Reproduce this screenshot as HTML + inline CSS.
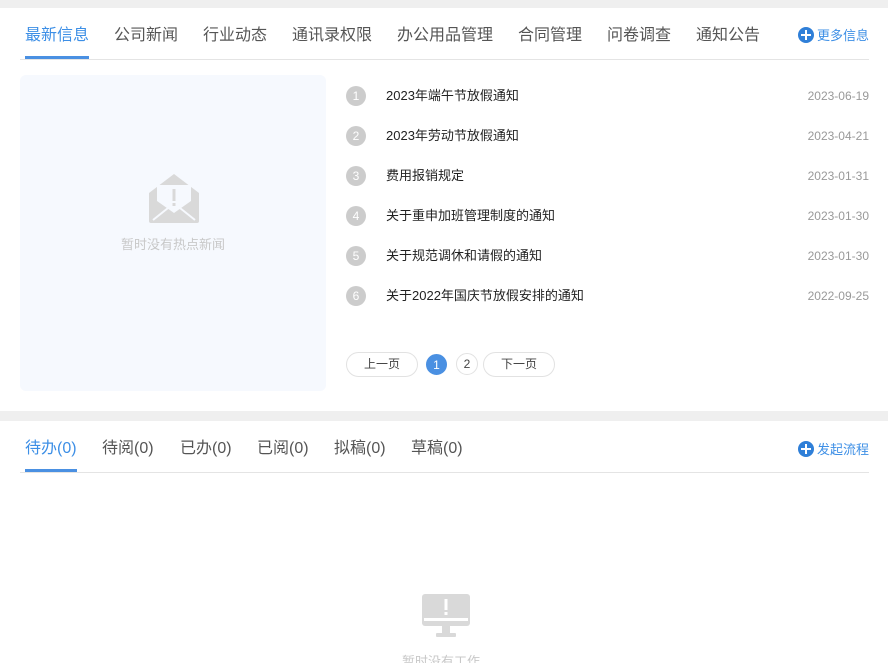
<!DOCTYPE html>
<html><head><meta charset="utf-8"><style>
*{margin:0;padding:0;box-sizing:border-box}
html,body{width:888px;height:663px;overflow:hidden}
body{background:#efefef;font-family:"Liberation Sans","Noto Sans CJK SC",sans-serif;position:relative}
.panel{position:absolute;left:0;right:0;background:#fff}
.tabs{position:absolute;left:20px;right:19px;height:1px;background:#e4e4e4}
.tab{position:absolute;font-size:16px;color:#555;white-space:nowrap;line-height:20px}
.tab.on{color:#3d8fe6}
.ul{position:absolute;height:3px;background:#4a90e2}
.more{position:absolute;right:19px;font-size:13px;color:#3d8fe6;display:flex;align-items:center;gap:3px}
.more i{display:inline-block;width:16px;height:16px;border-radius:50%;background:#2f7fd8;position:relative}
.more i:before{content:"";position:absolute;left:3px;top:7px;width:10px;height:2px;background:#fff}
.more i:after{content:"";position:absolute;left:7px;top:3px;width:2px;height:10px;background:#fff}
.box{position:absolute;left:20px;top:75px;width:306px;height:316px;background:#f6f9fe;border-radius:6px}
.row{position:absolute;left:346px;width:523px;height:20px;font-size:13px;color:#222;line-height:20px}
.row .n{position:absolute;left:0;top:0;width:20px;height:20px;border-radius:50%;background:#ccc;color:#fff;text-align:center;font-size:12px}
.row .t{position:absolute;left:40px}
.row .d{position:absolute;right:0;color:#999;font-size:12px}
.pg{position:absolute;top:352px;height:25px;border:1px solid #e2e2e2;border-radius:13px;font-size:12px;color:#444;text-align:center;line-height:23px}
</style></head><body>
<div class="panel" style="top:8px;height:403px"></div>
<div class="panel" style="top:421px;height:242px"></div>

<div class="tab on" style="left:25px;top:26px">最新信息</div>
<div class="tab" style="left:114px;top:26px">公司新闻</div>
<div class="tab" style="left:203px;top:26px">行业动态</div>
<div class="tab" style="left:292px;top:26px">通讯录权限</div>
<div class="tab" style="left:397px;top:26px">办公用品管理</div>
<div class="tab" style="left:518px;top:26px">合同管理</div>
<div class="tab" style="left:607px;top:26px">问卷调查</div>
<div class="tab" style="left:696px;top:26px">通知公告</div>
<div class="more" style="top:25px"><i></i>更多信息</div>
<div class="tabs" style="top:59px"></div>
<div class="ul" style="left:25px;top:56px;width:64px"></div>

<div class="box">
<svg style="position:absolute;left:128px;top:98px" width="52" height="52" viewBox="0 0 52 52"><path d="M1 20 L26 1 L51 20 L51 48 Q51 50 49 50 L3 50 Q1 50 1 48Z" fill="#d9d9d9"/><path d="M9 12 H43 V28 L26 40 L9 28Z" fill="#f6f9fe"/><rect x="24.5" y="16" width="3" height="12" fill="#d9d9d9"/><rect x="24.5" y="30" width="3" height="3" fill="#d9d9d9"/><path d="M5 47 L20 35 M47 47 L32 35" stroke="#f6f9fe" stroke-width="2"/></svg>
<div style="position:absolute;left:0;right:0;top:159px;text-align:center;font-size:13px;color:#c8c8c8">暂时没有热点新闻</div>
</div>

<div class="row" style="top:86px"><span class="n">1</span><span class="t">2023年端午节放假通知</span><span class="d">2023-06-19</span></div>
<div class="row" style="top:126px"><span class="n">2</span><span class="t">2023年劳动节放假通知</span><span class="d">2023-04-21</span></div>
<div class="row" style="top:166px"><span class="n">3</span><span class="t">费用报销规定</span><span class="d">2023-01-31</span></div>
<div class="row" style="top:206px"><span class="n">4</span><span class="t">关于重申加班管理制度的通知</span><span class="d">2023-01-30</span></div>
<div class="row" style="top:246px"><span class="n">5</span><span class="t">关于规范调休和请假的通知</span><span class="d">2023-01-30</span></div>
<div class="row" style="top:286px"><span class="n">6</span><span class="t">关于2022年国庆节放假安排的通知</span><span class="d">2022-09-25</span></div>

<div class="pg" style="left:346px;width:72px">上一页</div>
<div class="pg" style="left:426px;width:21px;height:21px;top:354px;line-height:21px;background:#4a90e2;border-color:#4a90e2;color:#fff">1</div>
<div class="pg" style="left:456px;width:22px;height:22px;top:353px;line-height:20px">2</div>
<div class="pg" style="left:483px;width:72px">下一页</div>

<div class="tab on" style="left:25px;top:439px">待办(0)</div>
<div class="tab" style="left:102px;top:439px">待阅(0)</div>
<div class="tab" style="left:180px;top:439px">已办(0)</div>
<div class="tab" style="left:257px;top:439px">已阅(0)</div>
<div class="tab" style="left:334px;top:439px">拟稿(0)</div>
<div class="tab" style="left:411px;top:439px">草稿(0)</div>
<div class="more" style="top:439px"><i></i>发起流程</div>
<div class="tabs" style="top:472px"></div>
<div class="ul" style="left:25px;top:469px;width:52px"></div>

<svg style="position:absolute;left:422px;top:594px" width="48" height="44" viewBox="0 0 48 44"><rect x="0" y="0" width="48" height="32" rx="3" fill="#d9d9d9"/><rect x="2" y="24" width="44" height="3" fill="#fff"/><rect x="22.5" y="5" width="3" height="11" fill="#fff"/><rect x="22.5" y="18" width="3" height="3" fill="#fff"/><rect x="20" y="32" width="8" height="7" fill="#d9d9d9"/><rect x="14" y="39" width="20" height="4" rx="1" fill="#d9d9d9"/></svg>
<div style="position:absolute;left:402px;top:651px;font-size:13px;color:#c8c8c8">暂时没有工作</div>
</body></html>
